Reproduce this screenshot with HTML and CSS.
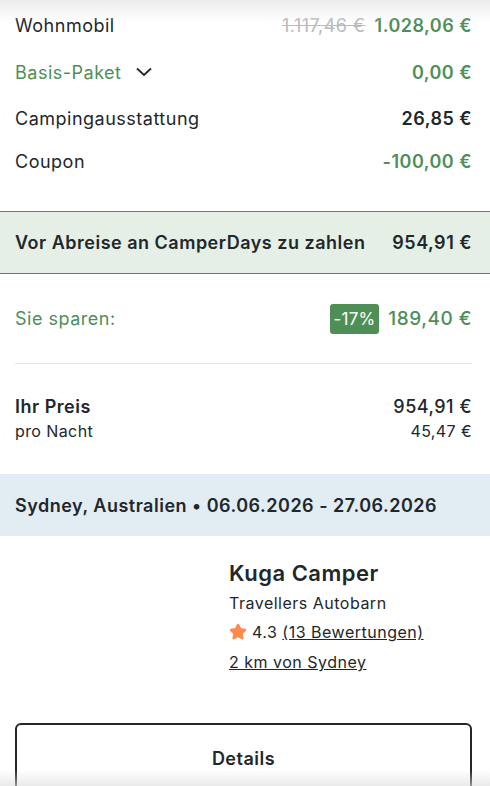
FILE: index.html
```html
<!DOCTYPE html>
<html lang="de">
<head>
    <meta charset="UTF-8">
    <meta name="viewport" content="width=device-width, initial-scale=1.0">
    <title>Preisübersicht</title>
    <link rel="stylesheet" href="styles.css">
</head>
<body>
    <div class="page">
        <div class="lines">
            <div class="line">
                <span>Wohnmobil</span>
                <span class="price"><s class="old">1.117,46 €</s><b class="green">1.028,06 €</b></span>
            </div>
            <div class="line">
                <span class="green toggle">Basis-Paket
                    <svg width="20" height="12" viewBox="0 0 20 12"><path d="M3 2.5 L10 9 L17 2.5" fill="none" stroke="#22272b" stroke-width="1.8"/></svg>
                </span>
                <b class="green">0,00 €</b>
            </div>
            <div class="line">
                <span>Campingausstattung</span>
                <b>26,85 €</b>
            </div>
            <div class="line">
                <span>Coupon</span>
                <b class="green">-100,00 €</b>
            </div>
        </div>

        <div class="due">
            <span>Vor Abreise an CamperDays zu zahlen</span>
            <span>954,91 €</span>
        </div>

        <div class="savings">
            <span>Sie sparen:</span>
            <span class="price"><span class="badge">-17%</span><span class="save-amount">189,40 €</span></span>
        </div>

        <div class="total">
            <div class="total-row">
                <b>Ihr Preis</b>
                <span class="total-price">954,91 €</span>
            </div>
            <div class="total-row small">
                <span>pro Nacht</span>
                <span>45,47 €</span>
            </div>
        </div>

        <div class="trip">Sydney, Australien • 06.06.2026 - 27.06.2026</div>

        <div class="vehicle">
            <div class="vehicle-info">
                <h3>Kuga Camper</h3>
                <div class="vendor">Travellers Autobarn</div>
                <div class="rating">
                    <svg width="18" height="18" viewBox="0 0 24 24"><path d="M12 2.5 L15 8.3 L21.5 9.3 L16.8 13.9 L17.9 20.4 L12 17.4 L6.1 20.4 L7.2 13.9 L2.5 9.3 L9 8.3 Z" fill="#ff8a4c" stroke="#ff8a4c" stroke-width="3" stroke-linejoin="round"/></svg>
                    <span>4.3</span>
                    <a href="#">(13 Bewertungen)</a>
                </div>
                <a href="#" class="distance">2 km von Sydney</a>
            </div>
        </div>

        <div class="actions">
            <button class="details-btn">Details</button>
        </div>
    </div>
    <div class="fade-top"></div>
    <div class="fade-bottom"></div>
</body>
</html>
```

FILE: styles.css
```css
body {
    margin: 0;
    font-family: Inter, "Noto Sans", sans-serif;
    color: #22272b;
    background: #fff;
    letter-spacing: 0.5px;
}
.page {
    width: 490px;
    overflow: hidden;
}
.green {
    color: #4e8f57;
}
.lines {
    padding: 4px 18px 28px 15px;
}
.line {
    display: flex;
    justify-content: space-between;
    align-items: center;
    font-size: 18px;
    height: 43px;
}
.line:nth-child(2) {
    height: 50px;
}
.line b {
    font-weight: 600;
}
.price {
    display: flex;
    align-items: center;
    gap: 9px;
}
.old {
    color: #b8babc;
}
.toggle {
    display: flex;
    align-items: center;
    gap: 12px;
}
.due {
    display: flex;
    justify-content: space-between;
    align-items: center;
    height: 61px;
    padding: 0 18px 0 15px;
    background: #e5efe6;
    border-top: 1px solid #4e8f57;
    border-bottom: 1px solid #4e8f57;
    font-size: 18px;
    font-weight: 600;
}
.savings {
    display: flex;
    justify-content: space-between;
    align-items: center;
    height: 89px;
    margin: 0 18px 0 15px;
    border-bottom: 1px solid #e2e4e6;
    color: #4e8f57;
    font-size: 18px;
}
.badge {
    background: #4e8f57;
    color: #fff;
    border-radius: 3px;
    padding: 5px 4px;
    font-size: 17px;
    letter-spacing: 0.2px;
}
.save-amount {
    font-size: 19px;
    font-weight: 500;
}
.total {
    padding: 31px 18px 31px 15px;
}
.total-row {
    display: flex;
    justify-content: space-between;
    font-size: 18px;
    line-height: 24px;
}
.total-row b {
    font-weight: 600;
}
.total-price {
    font-weight: 500;
}
.total-row.small {
    font-size: 16px;
    line-height: 24px;
    letter-spacing: 0.4px;
}
.trip {
    background: #e1edf3;
    height: 62px;
    display: flex;
    align-items: center;
    padding: 0 15px;
    font-size: 18px;
    font-weight: 600;
}
.vehicle {
    padding: 22px 15px 0 229px;
    height: 187px;
    box-sizing: border-box;
}
.vehicle h3 {
    margin: 0;
    font-size: 22px;
    font-weight: 600;
    line-height: 30px;
}
.vendor {
    font-size: 16px;
    line-height: 30px;
}
.rating {
    display: flex;
    align-items: center;
    gap: 5px;
    font-size: 16px;
    line-height: 28px;
}
.rating a,
.distance {
    color: #22272b;
}
.distance {
    font-size: 16px;
    line-height: 32px;
}
.actions {
    padding: 0 18px 0 15px;
}
.details-btn {
    width: 100%;
    height: 70px;
    border: 2px solid #22272b;
    border-radius: 6px;
    background: #fff;
    font-family: inherit;
    font-size: 18px;
    font-weight: 600;
    letter-spacing: 0.5px;
    color: #22272b;
}
.fade-top {
    position: fixed;
    top: 0;
    left: 0;
    right: 0;
    height: 22px;
    background: linear-gradient(#ececed, rgba(255, 255, 255, 0));
    pointer-events: none;
}
.fade-bottom {
    position: fixed;
    bottom: 0;
    left: 0;
    right: 0;
    height: 16px;
    background: linear-gradient(rgba(255, 255, 255, 0), rgba(220, 220, 222, 0.6));
    pointer-events: none;
}
```
